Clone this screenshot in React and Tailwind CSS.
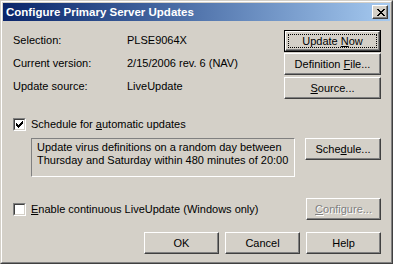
import React from "react";

function Check() {
  const cols = [
    [1, 3], [2, 4], [3, 5], [4, 4], [5, 3], [6, 2], [7, 1],
  ];
  return (
    <svg width="9" height="9" viewBox="0 0 9 9" shapeRendering="crispEdges">
      {cols.map(([x, y]) => (
        <rect key={x} x={x} y={y} width="1" height="3" fill="#000" />
      ))}
    </svg>
  );
}

function CheckBox({ checked }) {
  return (
    <div className="w-[13px] h-[13px] shrink-0 border border-t-[#808080] border-l-[#808080] border-r-white border-b-white">
      <div className="w-full h-full bg-white border border-t-[#404040] border-l-[#404040] border-r-[#d4d0c8] border-b-[#d4d0c8] flex">
        {checked ? <Check /> : null}
      </div>
    </div>
  );
}

function Btn({ children, className = "", isDefault = false, disabled = false }) {
  const face = (
    <div className="flex-1 flex border border-t-white border-l-white border-r-[#404040] border-b-[#404040] shadow-[inset_-1px_-1px_0_#808080]">
      {isDefault ? (
        <div className="flex-1 flex p-[2px]">
          <div className="flex-1 flex items-center justify-center border border-dotted border-black">
            {children}
          </div>
        </div>
      ) : (
        <div
          className={
            "flex-1 flex items-center justify-center " +
            (disabled ? "text-[#808080] [text-shadow:1px_1px_0_#ffffff]" : "")
          }
        >
          {children}
        </div>
      )}
    </div>
  );
  return (
    <div className={"flex shrink-0 " + (isDefault ? "border border-black " : "") + className}>
      {face}
    </div>
  );
}

function CloseGlyph() {
  const rects = [
    [0, 0, 2], [6, 0, 2],
    [1, 1, 2], [5, 1, 2],
    [2, 2, 4],
    [3, 3, 2],
    [2, 4, 4],
    [1, 5, 2], [5, 5, 2],
    [0, 6, 2], [6, 6, 2],
  ];
  return (
    <svg width="8" height="7" viewBox="0 0 8 7" shapeRendering="crispEdges">
      {rects.map(([x, y, w], i) => (
        <rect key={i} x={x} y={y} width={w} height="1" fill="#000" />
      ))}
    </svg>
  );
}

export default function App() {
  return (
    <div className="w-[393px] h-[264px] bg-[#d4d0c8] text-black text-[11px] leading-[13px] font-['Liberation_Sans',Arial,sans-serif] border border-t-[#d4d0c8] border-l-[#d4d0c8] border-r-[#404040] border-b-[#404040] overflow-hidden">
      <div className="h-full flex flex-col border border-t-white border-l-white border-r-[#808080] border-b-[#808080] p-[1px]">
        {/* Title bar */}
        <div className="h-[18px] shrink-0 flex items-center pl-[3px] pr-[2px] bg-gradient-to-r from-[#0a246a] to-[#a6caf0]">
          <span className="text-white font-bold text-[11.5px] leading-[14px]">
            Configure Primary Server Updates
          </span>
          <div className="ml-auto w-[16px] h-[14px] flex border border-t-white border-l-white border-r-[#404040] border-b-[#404040] bg-[#d4d0c8] shadow-[inset_-1px_-1px_0_#808080]">
            <div className="flex-1 flex items-center justify-center pl-[1px]">
              <CloseGlyph />
            </div>
          </div>
        </div>

        {/* Content */}
        <div className="flex-1 flex flex-col pl-[10px] pr-[9px]">
          {/* Top section */}
          <div className="flex items-start">
            <div className="flex flex-col pt-[8px]">
              <div className="h-[23px] flex items-center">
                <span className="w-[114px]">Selection:</span>
                <span>PLSE9064X</span>
              </div>
              <div className="h-[23px] flex items-center">
                <span className="w-[114px]">Current version:</span>
                <span>2/15/2006 rev. 6 (NAV)</span>
              </div>
              <div className="h-[23px] flex items-center">
                <span className="w-[114px]">Update source:</span>
                <span>LiveUpdate</span>
              </div>
            </div>
            <div className="ml-auto flex flex-col pt-[9px]">
              <Btn isDefault className="w-[97px] h-[22px]">
                <span>
                  Update <u>N</u>ow
                </span>
              </Btn>
              <Btn className="w-[97px] h-[22px] mt-[1px]">
                <span>
                  Definition <u>F</u>ile...
                </span>
              </Btn>
              <Btn className="w-[97px] h-[22px] mt-[2px]">
                <span>
                  <u>S</u>ource...
                </span>
              </Btn>
            </div>
          </div>

          {/* Schedule checkbox */}
          <div className="mt-[19px] h-[13px] flex items-center gap-[5px]">
            <CheckBox checked />
            <span>
              Schedule for <u>a</u>utomatic updates
            </span>
          </div>

          {/* Schedule description + button */}
          <div className="mt-[7px] flex items-start pl-[18px]">
            <div className="w-[264px] h-[39px] border border-t-[#808080] border-l-[#808080] border-r-white border-b-white px-[5px] pt-[2px]">
              <div>Update virus definitions on a random day between</div>
              <div>Thursday and Saturday within 480 minutes of 20:00</div>
            </div>
            <Btn className="ml-auto w-[76px] h-[22px]">
              <span>
                Sche<u>d</u>ule...
              </span>
            </Btn>
          </div>

          {/* Continuous LiveUpdate */}
          <div className="mt-[21px] h-[22px] flex items-center">
            <CheckBox />
            <span className="ml-[5px]">
              <u>E</u>nable continuous LiveUpdate (Windows only)
            </span>
            <Btn disabled className="ml-auto w-[75px] h-[22px]">
              <span>
                <u>C</u>onfigure...
              </span>
            </Btn>
          </div>

          {/* Bottom buttons */}
          <div className="mt-[12px] flex justify-end gap-[6px]">
            <Btn className="w-[75px] h-[22px]">OK</Btn>
            <Btn className="w-[75px] h-[22px]">Cancel</Btn>
            <Btn className="w-[75px] h-[22px]">Help</Btn>
          </div>
        </div>
      </div>
    </div>
  );
}
